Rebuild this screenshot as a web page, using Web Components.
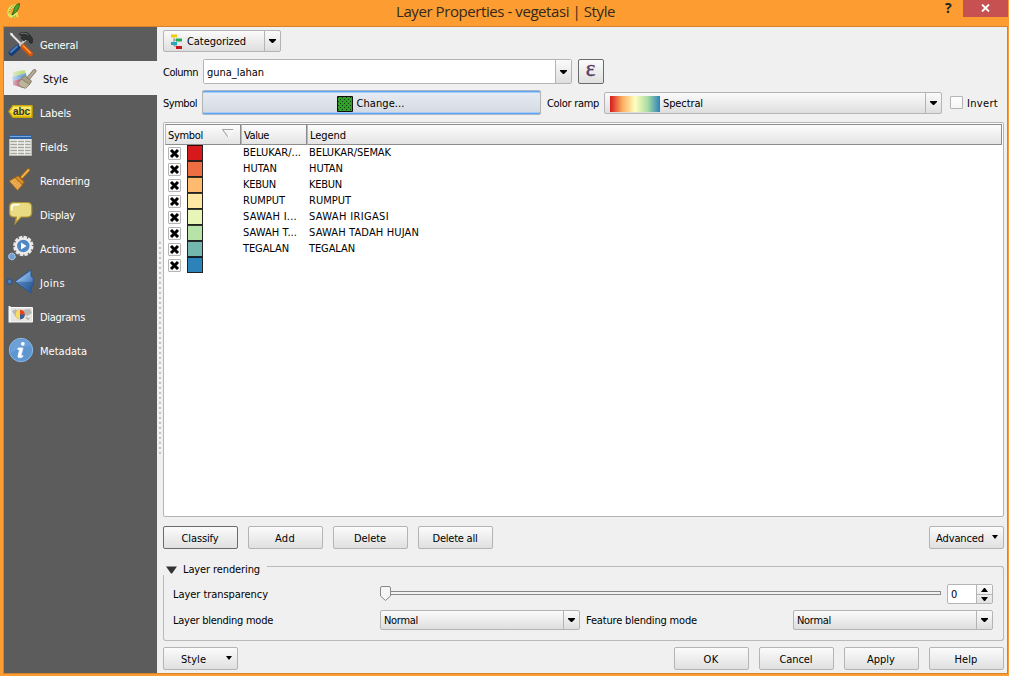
<!DOCTYPE html>
<html lang="en">
<head>
<meta charset="utf-8">
<title>Layer Properties - vegetasi | Style</title>
<style>
html,body{margin:0;padding:0;height:100%;overflow:hidden}
body{font:11px/16px "DejaVu Sans Condensed","DejaVu Sans",sans-serif;font-stretch:condensed;color:#000}
</style>
</head>
<body>
<layer-properties></layer-properties>
<script>
const define = (name, markup, setup) => customElements.define(name, class extends HTMLElement {
  connectedCallback() {
    if (this.shadowRoot) return;
    this.attachShadow({mode: 'open'}).innerHTML = '<style>*{box-sizing:border-box}:host([hidden]){display:none}</style>' +
      (typeof markup === 'function' ? markup(this) : markup);
    if (setup) setup(this, this.shadowRoot);
  }
});

const icons = {
  general: `<svg width="26" height="26" viewBox="0 0 26 26"><path d="M3 3l12 12" stroke="#8d8d8d" stroke-width="2.600"/><path d="M2.500 2.500l12 12" stroke="#f1f1f1" stroke-width="1.500"/><path d="M1.500 1.500l3 1 1 3" fill="#fff"/><path d="M17.500 8.500L11 15.500" stroke="#c4c4c4" stroke-width="2.400"/><path d="M11 3.500c2-2.500 7-3 10-.5l3.500 4.500-.3 4.500-2 .3-1.700-3.300-3-.8-1.500 1.800-3-3 1.500-2z" fill="#2f3333" stroke="#1c1e1e" stroke-width=".7"/><path d="M12.500 3c3-1.500 6-1 8 1" stroke="#777" fill="none"/><path d="M9.500 16.500L3.500 22" stroke="#173c78" stroke-width="5.400" stroke-linecap="round"/><path d="M9 15.500L3 21" stroke="#4b7fc4" stroke-width="2" stroke-linecap="round"/><path d="M15 15.500L22.500 23" stroke="#d95407" stroke-width="4.600" stroke-linecap="round"/><path d="M15.500 15L22.500 22" stroke="#ff9a45" stroke-width="1.600" stroke-linecap="round"/></svg>`,
  style: `<svg width="26" height="26" viewBox="0 0 26 26"><defs><linearGradient id="f"><stop offset="0" stop-color="#f0f0f0" stop-opacity=".75"/><stop offset=".6" stop-color="#f0f0f0" stop-opacity="0"/></linearGradient></defs><path d="M2 7l12-2 1 6-13 1z" fill="#c3dc86"/><path d="M1 12l14-4 1 6-14 3z" fill="#79acdf"/><path d="M2 16l12-3 3 7-4 3-11-3z" fill="#c84f78"/><path d="M0 5l14-1 3 16-15 3z" fill="url(#f)"/><path d="M23.500 6l-6 7" stroke="#857e69" stroke-width="3.800" stroke-linecap="round"/><path d="M23.500 6l-6 7" stroke="#b5ad94" stroke-width="2" stroke-linecap="round"/><path d="M13.500 10.500l7 5.500-2 3.500-8.500-6z" fill="#a79f87" stroke="#827b66"/><path d="M10.500 14l8 5.500-4 3.800-5.500-1.800-2-3.500z" fill="#bdb599" stroke="#8f8770"/></svg>`,
  labels: `<svg width="26" height="26" viewBox="0 0 26 26"><defs><linearGradient id="f" x2="0" y2="1"><stop stop-color="#fff07c"/><stop offset="1" stop-color="#eccb14"/></linearGradient></defs><path d="M1 12.500l4-5.800h19v11.600h-19z" fill="url(#f)" stroke="#c9a800" stroke-width="1.400" stroke-linejoin="round"/><text x="5" y="15.500" font-family="Liberation Sans" font-weight="700" font-size="10" textLength="17" fill="#333">abc</text></svg>`,
  fields: `<svg width="26" height="26" viewBox="0 0 26 26"><path d="M1.500 3.500h22v19h-22z" fill="#dfe1da" stroke="#b8bbb3"/><path d="M1 2h23v4H1z" fill="#2f62a4"/><path d="M2 3h21v1H2z" fill="#7aa8dc"/><path d="M2.500 8.500h20M2.500 11.500h20M2.500 14.500h20M2.500 17.500h20M2.500 20.500h20" stroke="#a3a69d" stroke-width="1.200"/><path d="M9.500 7v15M16.500 7v15" stroke="#eff0ec"/></svg>`,
  rendering: `<svg width="26" height="26" viewBox="0 0 26 26"><path d="M20.500 3L14 10" stroke="#9b6411" stroke-width="3.600" stroke-linecap="round"/><path d="M20.500 3L14 10" stroke="#efb14b" stroke-width="2" stroke-linecap="round"/><path d="M10 8.500l6.500 6.500-2.500 3-7-7z" fill="#d98e2a" stroke="#91590c"/><path d="M7 10.500l7.500 7.500L9.500 23.500 1 14z" fill="#e6a244" stroke="#9a6212"/><path d="M4 14l8 6M3 15l7 7M7 12l6 6" stroke="#f7cf86" stroke-width=".8" stroke-dasharray="1 1"/></svg>`,
  display: `<svg width="26" height="26" viewBox="0 0 26 26"><path d="M6 1.500h13q4.700 0 4.700 4.500v5.500q0 4.500-4.700 4.500h-6L7 22.500 8.500 16H6q-4.500 0-4.500-4.500V6Q1.500 1.500 6 1.500z" fill="#e9da84" stroke="#b2942f" stroke-width="1.200"/><path d="M3.800 9V6.500q0-2.800 3-2.800h4" fill="none" stroke="#fff" stroke-width="1.600" stroke-linecap="round"/></svg>`,
  actions: `<svg width="27" height="28" viewBox="0 0 27 28"><circle cx="15.300" cy="12" r="8.600" fill="none" stroke="#e8e8e8" stroke-width="3.200" stroke-dasharray="3.300 1.200"/><circle cx="15.300" cy="12" r="7.400" fill="#4f86c4" stroke="#ececec" stroke-width="2.400"/><path d="M13 8.400l5.600 3.600-5.600 3.600z" fill="#fff"/><circle cx="3.900" cy="22.500" r="3.300" fill="#6da1db" stroke="#dce2ea" stroke-width="1" stroke-dasharray="1.500 .7"/></svg>`,
  joins: `<svg width="28" height="26" viewBox="0 0 28 26" style="margin-left:-2px"><defs><linearGradient id="f" y2="1"><stop stop-color="#c2dbf5"/><stop offset=".5" stop-color="#6d9fd6"/><stop offset="1" stop-color="#24589c"/></linearGradient></defs><path d="M25 1v6.500l2.300 1v8L25 17.500V24L9 12.500z" fill="url(#f)" stroke="#285690"/><path d="M10 12.700h17v3.800l-2 1V23z" fill="#244f89" opacity=".5"/><circle cx="3.500" cy="12.500" r="2.600" fill="#4c7fbd" stroke="#244d82"/></svg>`,
  diagrams: `<svg width="26" height="26" viewBox="0 0 26 26"><path d="M2 4.500h22.500v14.500H2z" fill="#e5e5e2" stroke="#fafafa"/><path d="M4 8l4-2 2 4-3 3zM14 7l8-1 2 4-5 3-3-2zM17 14l5 1-2 2.500z" fill="#b7b7b3"/><path d="M1.500 3v16.500" stroke="#f7f7f7" stroke-width="2"/><circle cx="12" cy="11.500" r="4.800" fill="#e74225"/><path d="M12 6.700a4.800 4.800 0 000 9.600z" fill="#f3df68"/><path d="M12 11.500h4.800a4.800 4.800 0 01-4.800 4.800z" fill="#315f9c"/></svg>`,
  metadata: `<svg width="26" height="26" viewBox="0 0 26 26"><circle cx="13" cy="13" r="11.700" fill="#5e96d2" stroke="#8fb9e8" stroke-width="1"/><path d="M3 9a11 11 0 0120 0q-10 0-20 7z" fill="#83b0e1" opacity=".45"/><circle cx="14.800" cy="6.800" r="1.900" fill="#fff"/><path d="M10 11h5l-2 7.500q0 1 2 0l-.5 1.500q-5 2-4.500-1l1.600-6.500H9.800z" fill="#fff" stroke="#fff" stroke-width=".7"/></svg>`
};

/* Text run spread to a fixed advance */
define('ui-text', '<style>:host{display:inline-block;white-space:pre;flex:none;height:16px;line-height:16px}span{display:inline-block}</style><span><slot></slot></span>', (el, root) => {
  const w = +el.getAttribute('w');
  if (!w) return;
  const span = root.querySelector('span');
  const natural = span.getBoundingClientRect().width;
  span.style.letterSpacing = (w - natural) / el.textContent.length + 'px';
  el.style.width = w + 'px';
});

define('nav-item', el => `<style>
:host{display:flex;align-items:center;height:34px;color:#fff;padding-left:4px}
:host([selected]){background:#f0f0f0;color:#000;padding-left:7px}
.i{width:32px;height:28px;display:flex;align-items:center;flex:none}
svg{display:block;flex:none}ui-text{margin-top:4px}
</style><div class="i">${icons[el.getAttribute('icon')]}</div><ui-text w="${el.getAttribute('w')}">${el.textContent}</ui-text>`);

define('push-button', `<style>
:host{display:flex;align-items:center;justify-content:center;flex:none;width:75px;height:23px;border:1px solid #b4b4b4;border-radius:2px;background:linear-gradient(#fbfbfb,#e0e0e0);padding:3px 1px 0 0;position:relative}
:host([strong]){border-color:#6b6b6b}
:host([focus]){border:1px solid #b4b4b4;border-top-color:#a9b6c6;border-bottom-color:#a9b6c6;background:linear-gradient(#e8edf5,#d3d9e1);box-shadow:inset 0 1px #5ea6f4,inset 0 2px #a5ccf8,inset 0 -1px #5ea6f4,inset 0 -2px #a5ccf8}
i{display:none}:host([menu]) {justify-content:flex-start;padding-left:var(--pl,6px)}
:host([menu]) i{display:block;position:absolute;right:5px;top:8px;border:3px solid transparent;border-top:4px solid #000;border-bottom:0}
</style><slot></slot><i></i>`);

define('combo-box', `<style>
:host{display:flex;flex:none;border:1px solid #b4b4b4;border-radius:2px;background:linear-gradient(#fbfbfb,#dedede)}
.v{flex:1;display:flex;align-items:center;padding-left:3px;padding-top:1px}
:host([edit]) .v{background:#fff;padding-top:2px}
.a{width:16px;border-left:1px solid #b4b4b4;display:flex;align-items:center;justify-content:center}
:host([edit]) .a{background:linear-gradient(#fbfbfb,#dedede)}
</style><div class="v"><slot></slot></div><div class="a"><svg width="7" height="4" viewBox="0 0 7 4"><path d="M0 0h7v1L4 4H3L0 1z"/></svg></div>`);

define('check-box', `<style>:host{display:block;flex:none;width:13px;height:13px;border:1px solid #b4b4b4;border-radius:1px;background:linear-gradient(#fff,#f5f5f5)}svg{display:none}:host([checked]) svg{display:block}</style><svg width="11" height="11" viewBox="0 0 11 11"><path d="M2 2l7 7M9 2l-7 7" stroke="#000" stroke-width="3"/></svg>`);

define('class-row', el => `<style>
:host{display:flex;height:16px}
.s{width:75px;display:flex;align-items:flex-start;padding-left:3px}
check-box{margin-top:2px}
.c{width:16px;height:16px;margin-left:6px;background:${el.getAttribute('color')};border:1px solid #222;border-top-color:rgba(0,0,0,.75)}
.v{width:66px;padding-left:3px}.l{padding-left:3px}
ui-text{display:block}
</style><div class="s"><check-box checked></check-box><div class="c"></div></div>
<div class="v">${el.getAttribute('value') ? `<ui-text w="${el.getAttribute('vw')}">${el.getAttribute('value')}</ui-text>` : ''}</div>
<div class="l">${el.getAttribute('legend') ? `<ui-text w="${el.getAttribute('lw')}">${el.getAttribute('legend')}</ui-text>` : ''}</div>`);

define('class-table', `<style>
:host{display:block;height:395px;border:1px solid #b4b4b4;border-radius:2px;background:#fff;padding:1px 1px 0}
.h{display:flex;height:21px}
.h div{display:flex;align-items:center;border:1px solid #8c8c8c;border-left:1px solid #b9b9b9;background:linear-gradient(#fcfcfc,#e4e4e4);padding:2px 0 0 2px}
.a{width:76px;justify-content:space-between;padding-right:6px!important}.b{width:66px}.c{flex:1}
svg{margin-top:-4px}
</style><div class="h"><div class="a"><ui-text w="35">Symbol</ui-text><svg width="12" height="9" viewBox="0 0 12 9"><path d="M.5.500h11" stroke="#a5a5a5"/><path d="M.5.500L6 8" stroke="#999"/><path d="M11.500.500L6 8" stroke="#fff"/></svg></div><div class="b"><ui-text w="25">Value</ui-text></div><div class="c"><ui-text w="36">Legend</ui-text></div></div><slot></slot>`);

define('title-bar', `<style>
:host{display:flex;height:26px;position:relative;justify-content:center;flex:none}
.q{position:absolute;left:7px;top:2px}
ui-text{font:15px/20px "Open Sans",sans-serif;color:#33291c;height:20px;margin:1px 0 0 2px}
.x{position:absolute;left:963px;top:0;width:45px;height:17px;background:#c75050;display:flex;align-items:center;justify-content:center;padding-bottom:2px}
b{position:absolute;left:945px;top:-1px;font:700 14px/17px "Open Sans",sans-serif;color:#222}
</style><svg class="q" width="14" height="17" viewBox="0 0 14 17"><path d="M9.500 4Q5 3 2.500 7q-2 6 1.500 7.500 4 1 6-4" fill="none" stroke="#dfe763" stroke-width="2.800"/><path d="M7 3.500Q2 6 2 12M5.500 15.500l4-2" stroke="#6d8c1c" fill="none" stroke-dasharray="1.500 1"/><path d="M12.500 1.500Q7.500 2.500 7 8l-2 5Q12.500 9 12.500 1.500z" fill="#4da32c" stroke="#1d5a14" stroke-width=".8"/><path d="M8.500 11l2.500 4" stroke="#dbe75c" stroke-width="2"/></svg>
<ui-text w="219">Layer Properties - vegetasi | Style</ui-text><b>?</b><div class="x"><svg width="9" height="8" viewBox="0 0 9 8"><path d="M1 .5l7 7M8 .5l-7 7" stroke="#fff" stroke-width="1.900"/></svg></div>`);

define('layer-rendering', `<style>
:host{display:block;height:76px}
.t{display:flex;align-items:center;height:12px;padding-left:3px}
.t svg{margin:-1px 6px 0 0}.t ui-text{margin-top:-1px}.line{flex:1;height:10px;align-self:flex-start;border:1px solid #b9b9b9;border-width:1px 1px 0 0;border-radius:0 3px 0 0;margin:2px 0 0 7px}
.box{height:66px;border:1px solid #b9b9b9;border-top:0;border-radius:0 0 3px 3px;padding:9px 10px 0 9px;margin-top:-1px}
.r{display:flex;align-items:center;height:20px}.r+.r{margin-top:6px}
.n{width:207px;padding-top:2px}
.sl{width:561px;height:20px;display:flex;align-items:center;flex:none}
.sl svg{margin-bottom:1px}
.g{flex:1;height:4px;border:1px solid #888;border-left:0;background:#f2f2f2;border-radius:0 1px 1px 0;margin-bottom:2px}
.spin{width:46px;height:20px;border:1px solid #b4b4b4;border-radius:2px;background:#fff;margin-left:6px;display:flex}
.spin p{margin:0;width:28px;padding:2px 0 0 3px}.ar{width:16px;border-left:1px solid #b4b4b4;background:linear-gradient(#fafafa,#e2e2e2);display:flex;flex-direction:column}
.ar div{height:9px;display:flex;align-items:center;justify-content:center}.ar div+div{border-top:1px solid #b4b4b4}
combo-box{width:200px;height:20px}.f{width:213px;padding:2px 0 0 6px}
</style>
<div class="t"><svg width="11" height="8" viewBox="0 0 11 8"><path d="M0 .5h11L6 7.500H5z" fill="#333"/></svg><ui-text w="77">Layer rendering</ui-text><div class="line"></div></div>
<div class="box"><div class="r"><div class="n"><ui-text w="95">Layer transparency</ui-text></div><div class="sl"><svg width="11" height="15" viewBox="0 0 11 15"><path d="M2 .5h7Q10.500.500 10.500 2v8L5.500 14.500.500 10V2Q.5.500 2 .5z" fill="#f6f6f6" stroke="#888"/></svg><div class="g"></div></div><div class="spin"><p><ui-text w="7">0</ui-text></p><div class="ar"><div><svg width="7" height="4"><path d="M0 4h7L4 0H3z"/></svg></div><div><svg width="7" height="4"><path d="M0 0h7L4 4H3z"/></svg></div></div></div></div>
<div class="r"><div class="n"><ui-text w="100">Layer blending mode</ui-text></div><combo-box><ui-text w="34">Normal</ui-text></combo-box><div class="f"><ui-text w="111">Feature blending mode</ui-text></div><combo-box><ui-text w="34">Normal</ui-text></combo-box></div></div>`);

define('layer-properties', `<style>
:host{display:flex;flex-direction:column;width:1009px;height:676px;background:#fd9c30}
.w{display:flex;margin:0 1px 2px 3px;border:1px solid #d4832b;height:648px;background:#f0f0f0}
nav{width:153px;background:#5c5c5c;flex:none}
.sp{width:6px;flex:none;padding:215px 0 0 2px}.sp i{display:block;width:2px;height:213px;background:repeating-linear-gradient(#c4c4c4 0 2px,#fafafa 2px 3px,transparent 3px 5px)}
main{width:841px;display:flex;flex-direction:column}
.r{display:flex;flex:none}
.r>ui-text{margin-top:6px}
.eps{font:23px/18px 'Liberation Serif',serif;color:#5d3a66;-webkit-text-stroke:.4px #5d3a66;margin-top:-8px}
</style>
<title-bar></title-bar>
<div class="w"><nav>
<nav-item icon="general" w="38">General</nav-item><nav-item selected icon="style" w="25">Style</nav-item><nav-item icon="labels" w="31">Labels</nav-item><nav-item icon="fields" w="28">Fields</nav-item><nav-item icon="rendering" w="50">Rendering</nav-item><nav-item icon="display" w="35">Display</nav-item><nav-item icon="actions" w="36">Actions</nav-item><nav-item icon="joins" w="25">Joins</nav-item><nav-item icon="diagrams" w="45">Diagrams</nav-item><nav-item icon="metadata" w="47">Metadata</nav-item>
</nav><div class="sp"><i></i></div><main>
<div class="r" style="margin-top:3px"><combo-box style="width:118px;height:22px"><svg style="margin:0 5px 0 4px" width="11" height="15" viewBox="0 0 11 15"><path d="M3 4v8h3M3 6h3" stroke="#888" fill="none"/><path d="M0 .5h6v3H0z" fill="#f0cb12"/><path d="M5 4.500h6v3H5z" fill="#1cae54"/><path d="M0 8h6v3H0z" fill="#24a9bd"/><path d="M5 12h6v3H5z" fill="#c5151c"/></svg><ui-text w="59">Categorized</ui-text></combo-box></div>
<div class="r" style="margin-top:7px"><ui-text w="35">Column</ui-text><combo-box edit style="width:369px;height:25px;margin-left:5px"><ui-text w="57">guna_lahan</ui-text></combo-box><push-button strong style="width:26px;height:25px;margin-left:6px"><span class="eps">ε</span></push-button></div>
<div class="r" style="margin-top:6px"><ui-text w="34">Symbol</ui-text><push-button focus style="width:339px;height:25px;margin-left:5px"><svg style="margin:-1px 4px 0 -1px" width="16" height="16"><defs><pattern id="d" width="4" height="4" patternUnits="userSpaceOnUse"><path d="M1 1h1v1H1zM3 3h1v1H3z" fill="#0d3c0b"/></pattern></defs><path d="M.5.500h15v15H.5z" fill="#33a02c" stroke="#111"/><path d="M1 1h14v14H1z" fill="url(#d)"/></svg><ui-text w="48">Change...</ui-text></push-button><ui-text w="52" style="margin-left:6px">Color ramp</ui-text><combo-box style="width:338px;height:22px;margin:2px 0 0 5px"><span style="width:50px;height:16px;margin:0 3px 0 2px;background:linear-gradient(90deg,#d7191c,#fdae61 25%,#ffffbf 50%,#abdda4 75%,#2b83ba)"></span><ui-text w="40">Spectral</ui-text></combo-box><check-box style="margin:6px 4px 0 8px"></check-box><ui-text w="31">Invert</ui-text></div>
<class-table style="margin-top:7px">
<class-row color="#d7191c" value="BELUKAR/..." vw="58" legend="BELUKAR/SEMAK" lw="82"></class-row>
<class-row color="#ed6e43" value="HUTAN" vw="34" legend="HUTAN" lw="34"></class-row>
<class-row color="#feba6e" value="KEBUN" vw="33" legend="KEBUN" lw="33"></class-row>
<class-row color="#fee8a4" value="RUMPUT" vw="42" legend="RUMPUT" lw="42"></class-row>
<class-row color="#e7f5b7" value="SAWAH I..." vw="54" legend="SAWAH IRIGASI" lw="80"></class-row>
<class-row color="#b7e2a8" value="SAWAH T..." vw="54" legend="SAWAH TADAH HUJAN" lw="110"></class-row>
<class-row color="#74b7ae" value="TEGALAN" vw="46" legend="TEGALAN" lw="46"></class-row>
<class-row color="#2b83ba"></class-row>
</class-table>
<div class="r" style="margin-top:9px;gap:10px"><push-button strong><ui-text w="37">Classify</ui-text></push-button><push-button><ui-text w="20">Add</ui-text></push-button><push-button><ui-text w="32">Delete</ui-text></push-button><push-button><ui-text w="45">Delete all</ui-text></push-button><push-button menu style="margin-left:auto"><ui-text w="48">Advanced</ui-text></push-button></div>
<layer-rendering style="margin-top:15px"></layer-rendering>
<div class="r" style="margin-top:7px;gap:10px"><push-button menu style="margin-right:auto;--pl:17px"><ui-text w="25">Style</ui-text></push-button><push-button><ui-text w="15">OK</ui-text></push-button><push-button><ui-text w="33">Cancel</ui-text></push-button><push-button><ui-text w="28">Apply</ui-text></push-button><push-button><ui-text w="23">Help</ui-text></push-button></div>
</main></div>`);
</script>
</body>
</html>
